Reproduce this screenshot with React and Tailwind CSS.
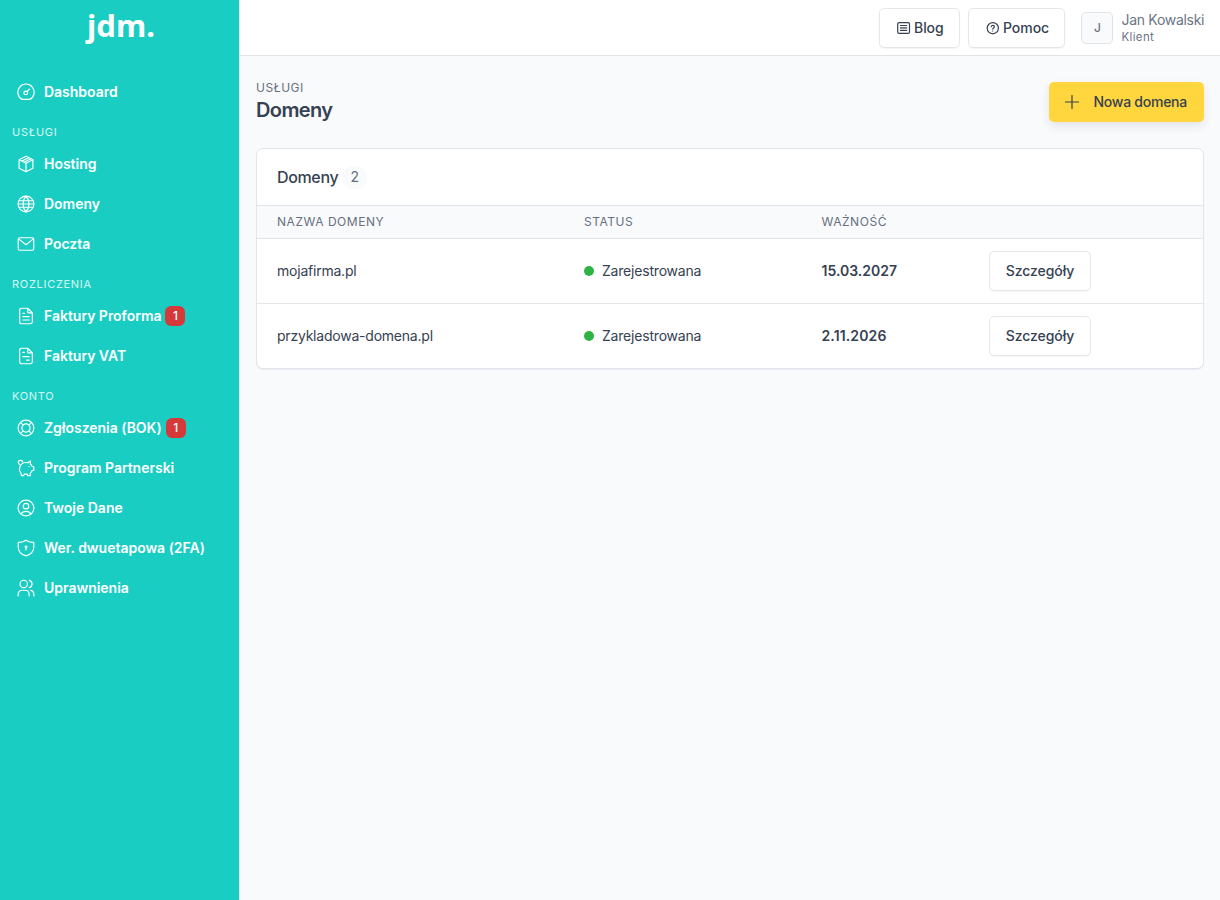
import React from "react";

const paths = {
  gauge: (
    <>
      <path d="M5 16.800h8a8.600 8.600 0 1 0-8 0z" />
      <circle cx="8.700" cy="10" r="1.900" />
      <path d="m10.200 8.600 2.300-2.700" />
    </>
  ),
  box: (
    <path d="m9 .9 7.300 3.700v8.800L9 17.100l-7.300-3.700V4.600L9 .9zM1.700 4.600 9 8.200l7.300-3.600M9 8.200v8.900M4.400 6l7.300-3.700M6.800 7.100l7.300-3.700" />
  ),
  globe: (
    <>
      <circle cx="9" cy="9" r="8.300" />
      <path d="M9 .8C4.900 5 4.900 13 9 17.200M9 .8c4.100 4.200 4.100 12.200 0 16.400M1.900 5.600h14.200M1.900 12.400h14.200M.8 9h16.400" />
    </>
  ),
  mail: (
    <>
      <rect x=".8" y="2.400" width="16.400" height="13.200" rx="1.500" />
      <path d="m1.200 3.600 7.800 6.200 7.800-6.200" />
    </>
  ),
  proforma: (
    <path d="M10.800.8H4.300a2 2 0 0 0-2 2v12.400a2 2 0 0 0 2 2h9.400a2 2 0 0 0 2-2V5.700zM10.800.8v3.900a1 1 0 0 0 1 1h3.900M5.800 6.300h1.600M5.800 9.700h6.600M5.800 13.200h6.600" />
  ),
  vat: (
    <path d="M10.800.8H4.300a2 2 0 0 0-2 2v12.400a2 2 0 0 0 2 2h9.400a2 2 0 0 0 2-2V5.700zM10.800.8v3.900a1 1 0 0 0 1 1h3.900M5.600 5.200h1.600M5.800 9.700h6.400M9.600 13.300h2.800" />
  ),
  buoy: (
    <>
      <circle cx="9" cy="9" r="8.300" />
      <circle cx="9" cy="9" r="4.300" />
      <path d="m3.300 3.300 2.700 2.700M14.700 3.300 12 6M3.300 14.700 6 12M14.700 14.700 12 12" />
    </>
  ),
  pig: (
    <>
      <path d="M4.600 4.700C5.700 3.700 7.200 3.200 9 3.200c.8 0 1.500.1 2.200.3l2.500-2v3.300c.8.700 1.300 1.400 1.600 2.300l1.900.9v3.300l-1.900.7c-.4 1-1 1.800-1.800 2.400v2.700h-2.700l-.6-1.700c-1 .2-2 .2-3 0l-.6 1.700H4.200l-.7-3.200c-1-1-1.500-2.300-1.500-3.700 0-2.100.9-4 2.600-5.500z" />
      <path d="M2.900 5.600C1.500 5.200.8 4.300.8 3.200.8 1.900 1.800.9 3.200.9c1.300 0 2.200.6 2.500 2M12 7.400h.2" />
    </>
  ),
  user: (
    <>
      <circle cx="9" cy="9" r="8.300" />
      <circle cx="9" cy="7.100" r="2.900" />
      <path d="M3.900 15.300c1-1.800 2.700-2.700 5.100-2.700s4.100.9 5.100 2.700" />
    </>
  ),
  shield: (
    <>
      <path d="M9 .7C6.500 2.400 4 3.100.8 3.100v4.700c0 4.500 3 8.200 8.200 9.500 5.200-1.300 8.200-5 8.200-9.500V3.100C14 3.100 11.500 2.400 9 .7z" />
      <circle cx="9" cy="7.800" r=".9" fill="currentColor" />
      <path d="M9 8.300v2.700" />
    </>
  ),
  users: (
    <>
      <circle cx="6.600" cy="4.700" r="3.900" />
      <path d="M.7 17.400v-1.600c0-2.700 1.700-4.400 4-4.400h3.600c2.300 0 4 1.700 4 4.400v1.600M12.400.9c1.800.4 3 1.900 3 3.800s-1.200 3.400-3 3.800M14 11.500c2 .4 3.300 2 3.300 4.300v1.600" />
    </>
  ),
};

function NavIcon({ name }) {
  return (
    <svg className="size-[18px] shrink-0" viewBox="-0.5 -0.5 19 19" fill="none" stroke="currentColor" strokeWidth="1.25" strokeLinecap="round" strokeLinejoin="round">
      {paths[name]}
    </svg>
  );
}

function NavItem({ icon, label, badge }) {
  return (
    <a className="flex h-10 items-center pl-[17px] text-sm font-semibold tracking-[-0.02px] text-white">
      <NavIcon name={icon} />
      <span className="ml-[9px] whitespace-nowrap">{label}</span>
      {badge && (
        <span className="ml-1 flex h-5 w-5 items-center justify-center rounded-[6px] bg-[#d63939] text-xs font-medium">{badge}</span>
      )}
    </a>
  );
}

function NavLabel({ children }) {
  return <div className="flex h-8 items-center pt-[9px] pl-3 text-[11px] tracking-[0.065em] text-white/80">{children}</div>;
}

const button = "flex h-10 items-center rounded-[5px] border border-[#e6e7e9] bg-white text-sm font-medium tracking-[-0.05px] shadow-[0_1px_1px_rgba(0,0,0,0.04)]";

const domains = [
  { name: "mojafirma.pl", date: "15.03.2027", dateTracking: "" },
  { name: "przykladowa-domena.pl", date: "2.11.2026", dateTracking: " tracking-[0.12px]" },
];

export default function App() {
  return (
    <div className="flex h-[900px] w-[1220px] overflow-hidden bg-[#f9fafc] font-['Inter',sans-serif] text-[#364152]">
      <aside className="h-full w-[239px] shrink-0 bg-[#1acdc3]">
        <div className="flex h-14 justify-center pl-[3px] font-['Noto_Sans',sans-serif] text-[31px] leading-[51px] font-bold text-white">jdm.</div>
        <nav className="pt-4">
          <NavItem icon="gauge" label="Dashboard" />
          <NavLabel>USŁUGI</NavLabel>
          <NavItem icon="box" label="Hosting" />
          <NavItem icon="globe" label="Domeny" />
          <NavItem icon="mail" label="Poczta" />
          <NavLabel>ROZLICZENIA</NavLabel>
          <NavItem icon="proforma" label="Faktury Proforma" badge="1" />
          <NavItem icon="vat" label="Faktury VAT" />
          <NavLabel>KONTO</NavLabel>
          <NavItem icon="buoy" label="Zgłoszenia (BOK)" badge="1" />
          <NavItem icon="pig" label="Program Partnerski" />
          <NavItem icon="user" label="Twoje Dane" />
          <NavItem icon="shield" label="Wer. dwuetapowa (2FA)" />
          <NavItem icon="users" label="Uprawnienia" />
        </nav>
      </aside>
      <div className="flex-1 border-l border-[#e6e7e9]">
        <header className="flex h-14 items-center justify-end border-b border-[#e1e5ea] bg-white pr-4">
          <a className={button + " w-[81px] pl-[17px]"}>
            <svg className="size-3.5" viewBox="0 0 14 14" fill="none" stroke="currentColor" strokeWidth="1.200">
              <rect x=".7" y="1.600" width="11.800" height="10.800" rx="1.500" />
              <path d="M3 4.500h7.200M3 6.900h7.200M3 9.300h7.200" />
            </svg>
            <span className="ml-[3px]">Blog</span>
          </a>
          <a className={button + " ml-2 w-[97px] pl-[17px]"}>
            <svg className="size-3.5" viewBox="0 0 14 14" fill="none" stroke="currentColor" strokeWidth="1.200" strokeLinecap="round">
              <circle cx="6.800" cy="7.200" r="5.600" />
              <path d="M5.300 5.700c.2-.9.800-1.300 1.500-1.300.9 0 1.600.5 1.600 1.400C8.400 6.900 6.800 7 6.800 8.200M6.800 10v.1" />
            </svg>
            <span className="ml-[3px]">Pomoc</span>
          </a>
          <span className="ml-4 flex size-8 items-center justify-center rounded-[5px] border border-[#dfe3e8] bg-[#f9fafc] pl-px text-xs font-medium text-[#697283]">J</span>
          <div className="ml-2 w-[83px] pl-[.5px] whitespace-nowrap text-[#6c7585]">
            <div className="-mt-0.5 text-sm leading-5 tracking-[-0.3px]">Jan Kowalski</div>
            <div className="text-[11.500px] leading-[14px] tracking-[0.35px]">Klient</div>
          </div>
        </header>
        <main className="px-4 pt-6">
          <div className="flex h-11 items-center justify-between">
            <div>
              <div className="text-xs leading-4 tracking-[0.04em] text-[#667080]">USŁUGI</div>
              <h1 className="text-[20px] leading-7 font-semibold tracking-[-0.6px]">Domeny</h1>
            </div>
            <a className="flex h-10 w-[155px] items-center rounded-[5px] bg-[#ffd63d] pl-4 text-sm font-medium tracking-[-0.25px] shadow-[0_4px_10px_rgba(30,41,59,0.1)]">
              <svg className="size-[14px]" viewBox="0 0 14 14" fill="none" stroke="currentColor" strokeWidth="1.200" strokeLinecap="round">
                <path d="M7 .5v13M.5 7h13" />
              </svg>
              <span className="ml-[14.500px]">Nowa domena</span>
            </a>
          </div>
          <section className="mt-6 rounded-[7px] border border-[#e1e5ec] bg-white shadow-[0_1px_1px_rgba(30,41,59,0.06)]">
            <div className="flex h-14 items-center px-5">
              <h2 className="text-base font-medium tracking-[-0.35px]">Domeny</h2>
              <span className="ml-1 flex h-[23px] w-[25px] items-center justify-center rounded-full bg-[#f9fafc] text-sm text-[#667080]">2</span>
            </div>
            <div className="grid h-[34px] grid-cols-[307px_237.500px_167.500px_1fr] items-center border-y border-[#e1e5ea] bg-[#f9fafc] px-5 text-xs tracking-[0.54px] text-[#667080]">
              <span>NAZWA DOMENY</span>
              <span>STATUS</span>
              <span>WAŻNOŚĆ</span>
            </div>
            {domains.map((d) => (
              <div key={d.name} className="grid h-[65px] grid-cols-[307px_237.500px_167.500px_1fr] items-center border-b border-[#e6e7e9] px-5 text-sm last:h-16 last:border-b-0">
                <span className="tracking-[-0.22px]">{d.name}</span>
                <span className="flex items-center tracking-[-0.2px]"><i className="mr-2 size-2.5 rounded-full bg-[#2fb344]" />Zarejestrowana</span>
                <span className={"font-semibold" + d.dateTracking}>{d.date}</span>
                <a className={button + " w-[102px] justify-center"}>Szczegóły</a>
              </div>
            ))}
          </section>
        </main>
      </div>
    </div>
  );
}
